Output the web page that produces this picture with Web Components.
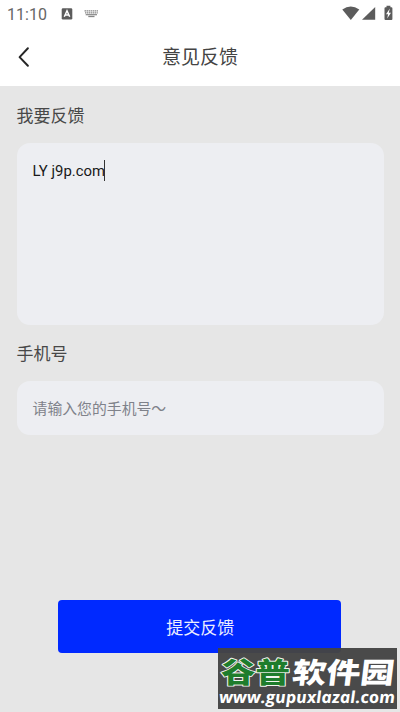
<!DOCTYPE html>
<html lang="zh-CN">
<head>
<meta charset="utf-8">
<title>意见反馈</title>
<style>
html,body{margin:0;height:100%;overflow:hidden}
body{background:#e6e6e6;font-family:Roboto,"Noto Sans CJK SC",sans-serif;color:#333}
</style>
</head>
<body>
<feedback-page></feedback-page>
<script>
function define(name, markup){
  const t=document.createElement('template');
  t.innerHTML=markup;
  customElements.define(name,class extends HTMLElement{
    constructor(){super();this.attachShadow({mode:'open'}).appendChild(t.content.cloneNode(true));}
  });
}
define('status-bar',`
<style>
:host{display:flex;height:28px;box-sizing:border-box;padding:0 6px 0 7px;align-items:center;background:#fff;color:#666}
time{font-size:16px;line-height:28px;padding-top:1px;height:27px;letter-spacing:.02px;width:54px}
svg{display:block}
.gap{flex:1}
</style>
<time>11:10</time>
<svg width="40" height="28" viewBox="61 0 40 28"><rect x="61.7" y="8.2" width="10.6" height="11.4" rx="1.3" fill="#5c5c5c"/><path d="M64.3 16.7L67 10.8L69.7 16.7M65.3 15H68.7" fill="none" stroke="#fff" stroke-width="1.5"/><g fill="none" stroke="#858585"><path d="M84.5 10.8H98.3M85 12.8H97.8" stroke-width="1.3" stroke-dasharray="1.5 .5"/><path d="M85.7 14.7H97" stroke-width="1.2"/><path d="M88.3 16.5H94.5" stroke-width="1.3"/></g></svg>
<span class="gap"></span>
<svg width="53" height="28" viewBox="341 0 53 28" fill="#5c5c5c"><path d="M342.3 9.5Q350.7 3.5 359.3 9.5L350.8 19.9Z"/><path d="M375.2 7V19.8H362Z"/><path d="M386.5 5.7H390.4V7.2H391.4Q392.4 7.2 392.4 8.2V19Q392.4 20 391.4 20H385.5Q384.5 20 384.5 19V8.2Q384.5 7.2 385.5 7.2H386.5Z"/><path d="M389.8 8.6L386 14.2H388.1L387.2 18.6L391 12.7H388.8Z" fill="#fff"/></svg>`);
define('nav-bar',`
<style>
:host{display:grid;grid-template-columns:48px 1fr 48px;height:58px;background:#fff;align-items:center;text-align:center}
svg{display:block}
h1{margin:0;font-size:19px;font-weight:400;line-height:56px;padding-top:2px;color:#444}
</style>
<svg width="48" height="58" viewBox="0 28 48 58"><path d="M27.9 48.3L19.6 57.1L27.9 65.7" fill="none" stroke="#262626" stroke-width="2" stroke-linecap="round" stroke-linejoin="round"/></svg>
<h1><slot></slot></h1>`);
define('field-group',`
<style>
:host{display:block}
.label{font-size:17px;line-height:25px;padding-bottom:14px;color:#484848}
</style>
<div class="label"><slot name="label"></slot></div><slot></slot>`);
define('text-box',`
<style>
:host{display:block;box-sizing:border-box;height:53.5px;padding:16px 16px 0;background:#edeef2;border-radius:13px;font-size:14.85px;line-height:25px;color:#7f828a}
:host([multiline]){height:182px;color:#191919;font-size:14.9px;padding-top:16px}
.line{display:flex;align-items:center;white-space:pre}
i{display:none;width:1px;height:21px;margin:-2px 0 0 -.8px;background:#333}
:host([multiline]) i{display:block}
</style>
<div class="line"><slot></slot><i></i></div>`);
define('submit-button',`
<style>
:host{display:block}
button{display:block;width:100%;height:53px;border:0;border-radius:4px;padding:3px 0 0 1px;background:#0029ff;color:#eceeff;font:400 17px/50px Roboto,"Noto Sans CJK SC",sans-serif}
</style>
<button><slot></slot></button>`);
define('site-watermark',`
<style>
:host{display:block;width:179px;height:61px;background:rgba(68,68,68,.97)}
svg{display:block}
.name{font:900 28.5px/1 "Noto Sans CJK SC",sans-serif}
</style>
<svg width="179" height="61" viewBox="0 0 179 61">
<text class="name" x="3" y="35" textLength="69" lengthAdjust="spacingAndGlyphs" fill="#1e7d2c" stroke="#f2f5f0" stroke-width="1.8" paint-order="stroke" stroke-linejoin="round">谷普</text>
<g transform="translate(77.5 0) skewX(-7)"><text class="name" x="0" y="35" textLength="102" lengthAdjust="spacingAndGlyphs" fill="#fff">软件园</text></g>
<g transform="translate(-3.8 0) skewX(5)"><text x=".5" y="54.7" textLength="176" lengthAdjust="spacingAndGlyphs" font-family="Open Sans" font-size="16.5" font-weight="700" font-style="italic" fill="#fff">www.gupuxlazal.com</text></g>
</svg>`);
define('feedback-page',`
<style>
:host{display:flex;flex-direction:column;height:712px;position:relative;background:#e6e6e6}
main{display:flex;flex-direction:column;gap:17px;padding:18px 16px 0 16.6px}
submit-button{margin:165.5px 59px 0 58.4px}
site-watermark{position:absolute;left:218px;top:648px}
</style>
<status-bar></status-bar>
<nav-bar>意见反馈</nav-bar>
<main>
<field-group><span slot="label">我要反馈</span><text-box multiline>LY j9p.com</text-box></field-group>
<field-group><span slot="label">手机号</span><text-box>请输入您的手机号～</text-box></field-group>
</main>
<submit-button>提交反馈</submit-button>
<site-watermark></site-watermark>`);
</script>
</body>
</html>
